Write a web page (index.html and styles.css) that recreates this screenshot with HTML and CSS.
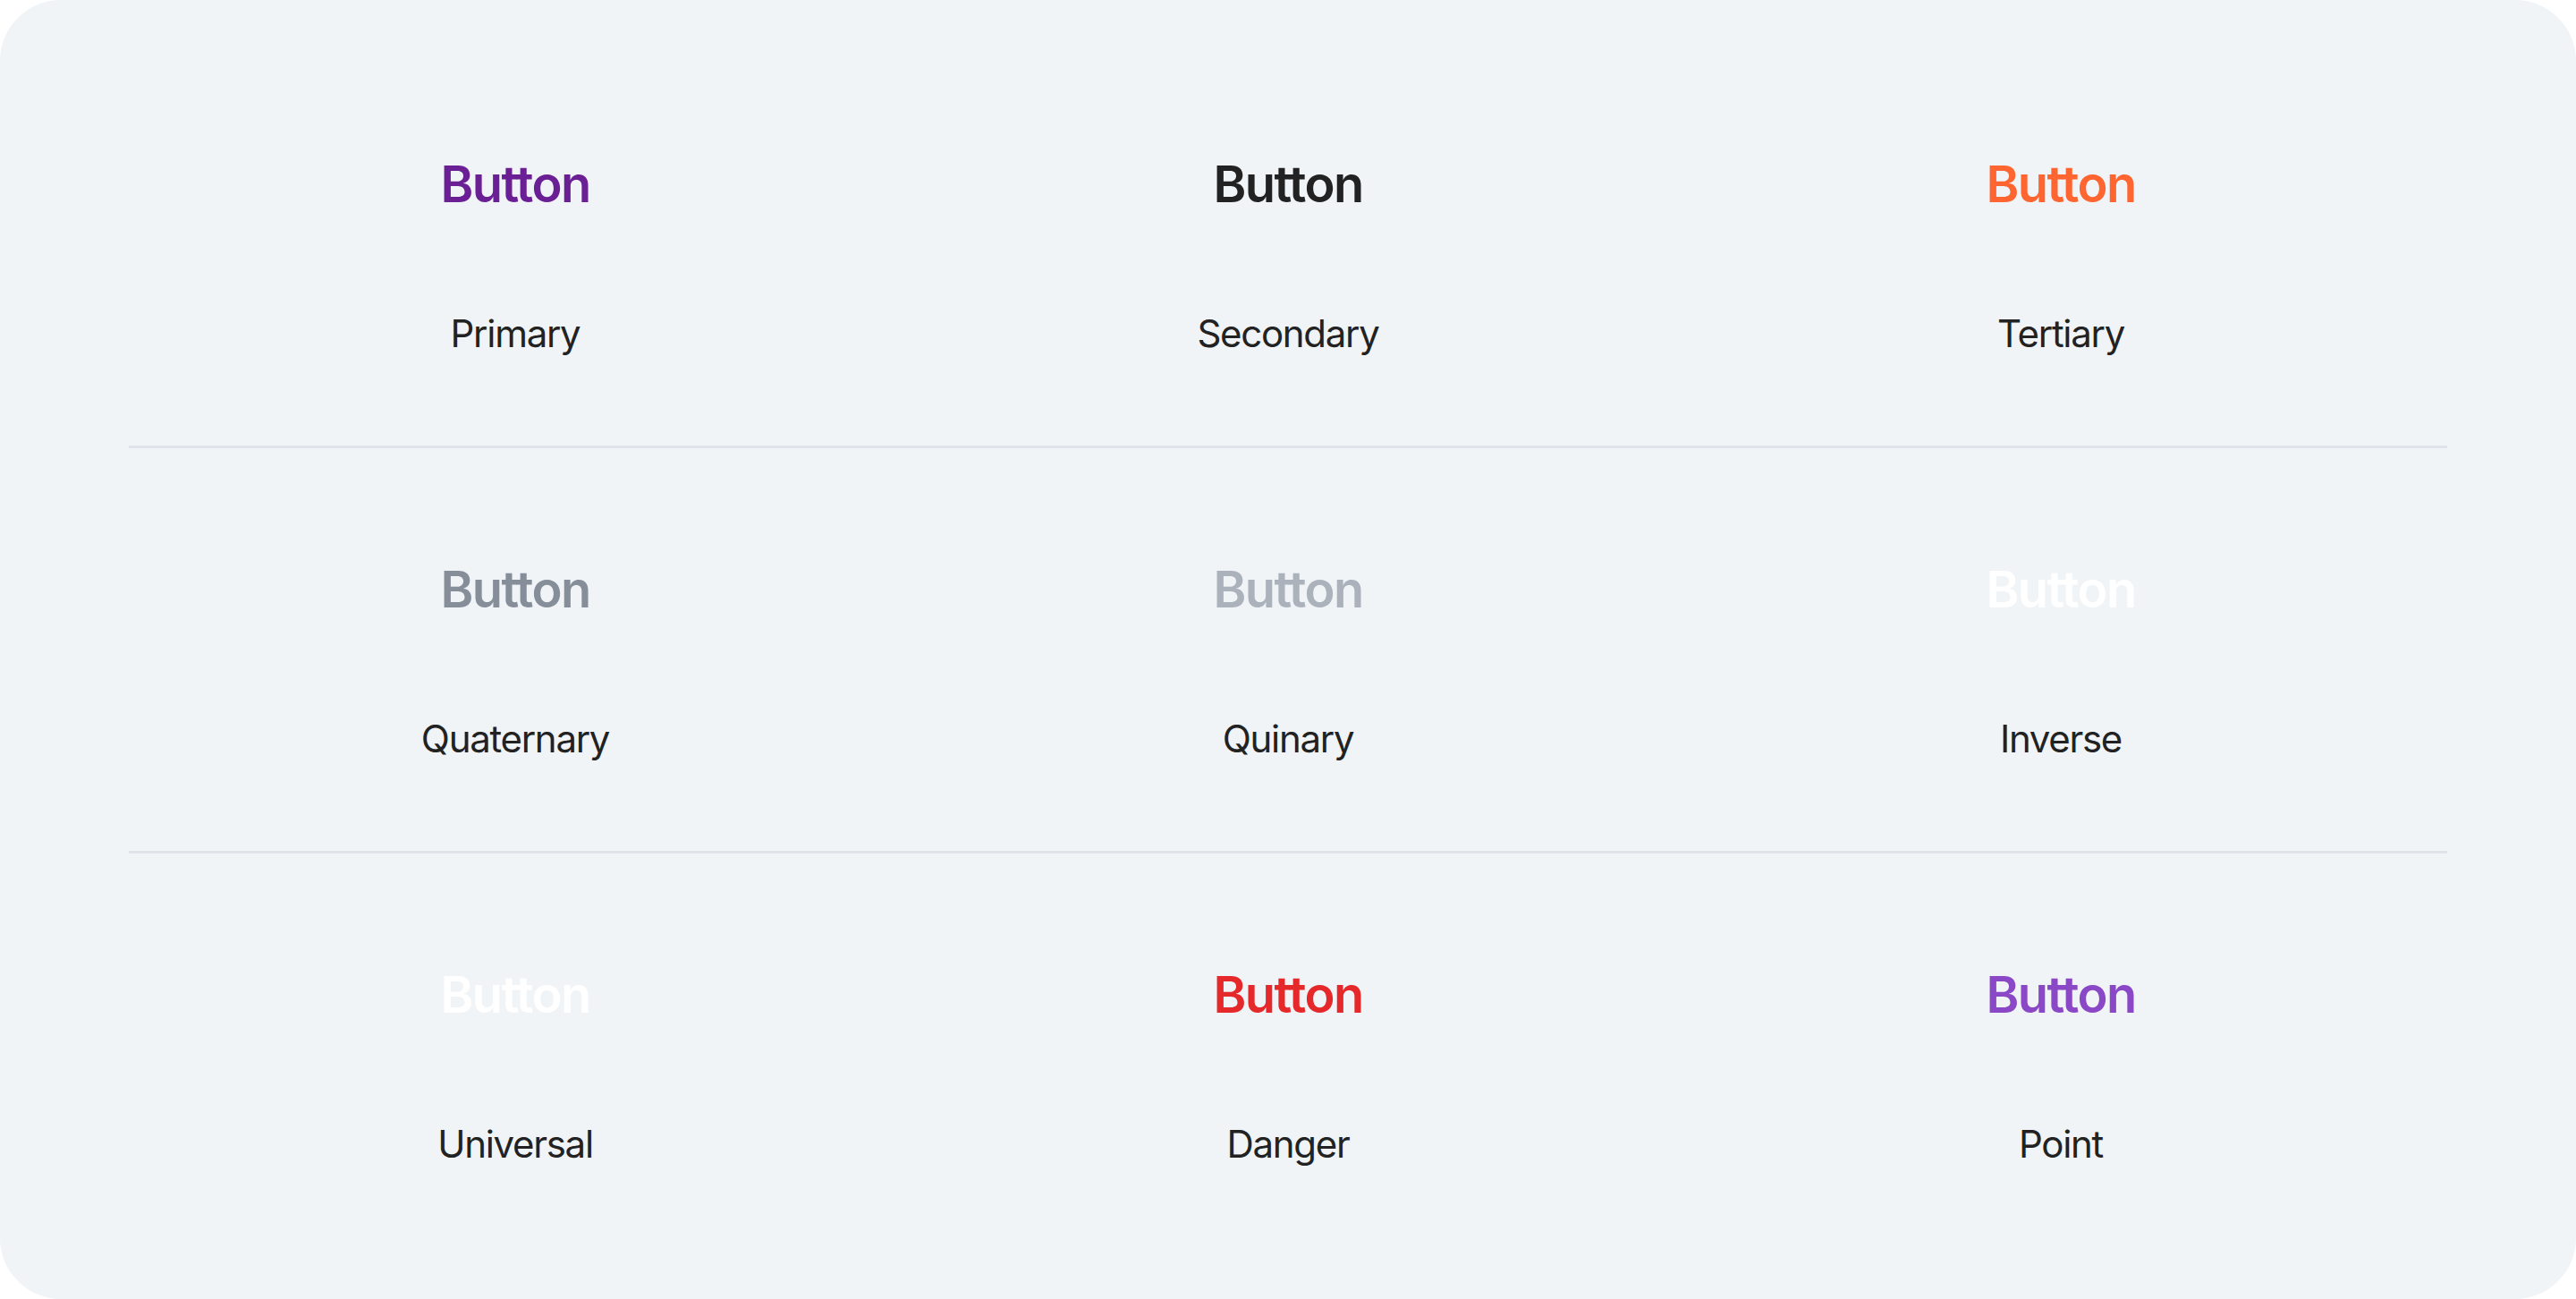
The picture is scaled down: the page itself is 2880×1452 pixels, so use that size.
FILE: index.html
```html
<!DOCTYPE html>
<html lang="en">
<head>
<meta charset="utf-8">
<title>Text Buttons</title>
<link rel="stylesheet" href="styles.css">
</head>
<body>
<main class="panel">
  <section class="row">
    <div class="cell"><span class="btn btn-primary">Button</span><span class="label">Primary</span></div>
    <div class="cell"><span class="btn btn-secondary">Button</span><span class="label">Secondary</span></div>
    <div class="cell"><span class="btn btn-tertiary">Button</span><span class="label">Tertiary</span></div>
  </section>
  <section class="row">
    <div class="cell"><span class="btn btn-quaternary">Button</span><span class="label">Quaternary</span></div>
    <div class="cell"><span class="btn btn-quinary">Button</span><span class="label">Quinary</span></div>
    <div class="cell"><span class="btn btn-inverse">Button</span><span class="label">Inverse</span></div>
  </section>
  <section class="row">
    <div class="cell"><span class="btn btn-universal">Button</span><span class="label">Universal</span></div>
    <div class="cell"><span class="btn btn-danger">Button</span><span class="label">Danger</span></div>
    <div class="cell"><span class="btn btn-point">Button</span><span class="label">Point</span></div>
  </section>
</main>
</body>
</html>
```

FILE: styles.css
```css
html, body {
  margin: 0;
  padding: 0;
  background: #ffffff;
}

body {
  font-family: Inter, "Noto Sans", "Liberation Sans", sans-serif;
  width: 2880px;
  height: 1452px;
}

.panel {
  box-sizing: border-box;
  width: 2880px;
  height: 1452px;
  background: #f0f4f7;
  border-radius: 68px;
  padding: 48px 144px;
  display: flex;
  flex-direction: column;
}

.row {
  height: 450px;
  display: grid;
  grid-template-columns: repeat(3, 1fr);
}

.row + .row {
  border-top: 3px solid #dfe3ea;
}

.cell {
  display: flex;
  flex-direction: column;
  align-items: center;
  padding-top: 124px;
}

.btn {
  font-size: 56px;
  line-height: 68px;
  font-weight: 600;
  letter-spacing: -1.6px;
}

.label {
  margin-top: 107px;
  font-size: 42px;
  line-height: 52px;
  font-weight: 400;
  letter-spacing: -1.3px;
  color: #222222;
}

.btn-primary { color: #6a1f94; }
.btn-secondary { color: #222222; }
.btn-tertiary { color: #fe6531; }
.btn-quaternary { color: #868e99; }
.btn-quinary { color: #abb2bc; }
.btn-inverse { color: #ffffff; }
.btn-universal { color: #ffffff; }
.btn-danger { color: #e5282a; }
.btn-point { color: #8b48c6; }
```
